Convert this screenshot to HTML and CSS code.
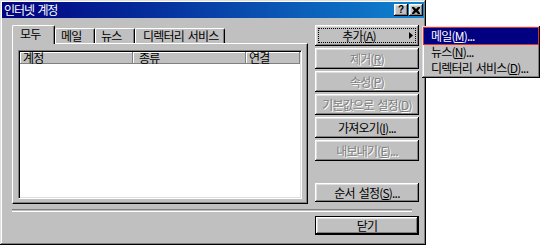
FILE: index.html
```html
<!DOCTYPE html>
<html>
<head>
<meta charset="utf-8">
<title>인터넷 계정</title>
<link rel="stylesheet" href="styles.css">
</head>
<body>
  <div class="window">
    <div class="titlebar">
      <span class="title">인터넷 계정</span>
      <div class="title-buttons">
        <span class="tbtn help">?</span>
        <span class="tbtn"><svg width="8" height="7" viewBox="0 0 8 7"><path d="M0 0h2l2 2 2-2h2v1l-2 2.5 2 2.5v1h-2l-2-2-2 2h-2v-1l2-2.5-2-2.5z" fill="#000"/></svg></span>
      </div>
    </div>

    <div class="dialog">
      <div class="main">
        <div class="tabs-area">
          <div class="tab-strip">
            <div class="tab active">모두</div>
            <div class="tab tab-mail">메일</div>
            <div class="tab tab-news">뉴스</div>
            <div class="tab tab-dir">디렉터리 서비스</div>
          </div>
          <div class="panel">
            <div class="listview">
              <div class="lv-header">
                <div class="col col-account">계정</div>
                <div class="col col-type">종류</div>
                <div class="col col-conn">연결</div>
              </div>
            </div>
          </div>
        </div>

        <div class="buttons">
          <button class="btn btn-add"><span class="label"><span class="focus">추가(<u>A</u>)</span></span><svg class="arrow" width="4" height="7" viewBox="0 0 4 7"><path d="M0 0L4 3.5L0 7z" fill="#000"/></svg></button>
          <button class="btn disabled">제거(<u>R</u>)</button>
          <button class="btn disabled">속성(<u>P</u>)</button>
          <button class="btn disabled">기본값으로 설정(<u>D</u>)</button>
          <button class="btn">가져오기(<u>I</u>)...</button>
          <button class="btn disabled">내보내기(<u>E</u>)...</button>
          <button class="btn btn-order">순서 설정(<u>S</u>)...</button>
        </div>
      </div>

      <div class="separator"></div>

      <div class="footer">
        <button class="btn btn-close">닫기</button>
      </div>
    </div>
  </div>

  <div class="menu">
    <div class="menu-item selected">메일(<u>M</u>)...</div>
    <div class="menu-item">뉴스(<u>N</u>)...</div>
    <div class="menu-item">디렉터리 서비스(<u>D</u>)...</div>
  </div>
</body>
</html>
```

FILE: styles.css
```css
html, body { margin: 0; padding: 0; }

body
{
    background: #fff;
    font: 12px "Noto Sans CJK KR", "Liberation Sans", sans-serif;
    letter-spacing: -0.8px;
    word-spacing: 2px;
    color: #000;
    position: relative;
    width: 540px;
    height: 245px;
    overflow: hidden;
}

/* window frame */

.window
{
    box-sizing: border-box;
    width: 426px;
    height: 245px;
    padding: 2px;
    background: #c0c0c0;
    box-shadow: inset -1px -1px #000, inset 1px 1px #dfdfdf, inset -2px -2px #808080, inset 2px 2px #fff;
}

.titlebar
{
    height: 16px;
    display: flex;
    align-items: center;
    justify-content: space-between;
    padding: 0 1px 0 2px;
    background: linear-gradient(90deg, #000080, #1084d0);
    color: #fff;
}

.title
{
    letter-spacing: -1.1px;
    line-height: 16px;
}

.title-buttons
{
    display: flex;
    gap: 1px;
}

.tbtn
{
    box-sizing: border-box;
    width: 14px;
    height: 12px;
    display: flex;
    align-items: center;
    justify-content: center;
    background: #c0c0c0;
    box-shadow: inset -1px -1px #000, inset 1px 1px #fff, inset -2px -2px #808080, inset 2px 2px #dfdfdf;
}

.tbtn.help
{
    color: #000;
    font: bold 10px "Liberation Sans", sans-serif;
    letter-spacing: 0;
    line-height: 12px;
}

/* dialog body */

.dialog
{
    padding: 7px 5px 0 10px;
}

.main
{
    display: flex;
    gap: 7px;
}

.tabs-area
{
    width: 296px;
}

.tab-strip
{
    height: 18px;
    display: flex;
    align-items: flex-end;
}

.tab
{
    box-sizing: border-box;
    height: 15px;
    padding-left: 5px;
    line-height: 14px;
    background: #c0c0c0;
    border-top: 1px solid #fff;
    border-left: 1px solid #fff;
    border-right: 1px solid #000;
    border-radius: 2px 2px 0 0;
    box-shadow: inset -1px 0 #808080;
    white-space: nowrap;
}

.tab.active
{
    width: 43px;
    height: 19px;
    padding-left: 7px;
    line-height: 16px;
    margin-bottom: -1px;
    position: relative;
    z-index: 1;
}

.tab-mail { width: 40px; }
.tab-news { width: 40px; }
.tab-dir { width: 90px; padding-left: 7px; }

.panel
{
    box-sizing: border-box;
    height: 161px;
    padding: 6px 5px 4px 5px;
    display: flex;
    border: 1px solid;
    border-color: #fff #000 #000 #fff;
    box-shadow: inset -1px -1px #808080;
}

.listview
{
    flex: 1;
    background: #fff;
    border: 1px solid;
    border-color: #808080 #fff #fff #808080;
    box-shadow: inset 1px 1px #000, inset -1px -1px #dfdfdf;
    padding: 1px;
}

.lv-header
{
    display: flex;
    height: 12px;
}

.col
{
    box-sizing: border-box;
    padding-left: 3px;
    line-height: 12px;
    background: #c0c0c0;
    box-shadow: inset -1px -1px #808080, inset 1px 1px #fff;
}

.col-account { width: 113px; }
.col-type { width: 113px; padding-left: 6px; }
.col-conn { flex: 1; }

/* buttons */

.buttons
{
    width: 104px;
    display: flex;
    flex-direction: column;
    gap: 2px;
}

.btn
{
    box-sizing: border-box;
    width: 104px;
    height: 21px;
    padding: 0;
    border: none;
    font: inherit;
    letter-spacing: inherit;
    word-spacing: inherit;
    color: #000;
    background: #c0c0c0;
    box-shadow: inset -1px -1px #000, inset 1px 1px #fff, inset -2px -2px #808080, inset 2px 2px #dfdfdf;
    display: flex;
    align-items: center;
    justify-content: center;
    white-space: nowrap;
}

.btn u { text-underline-offset: 1px; }

.btn.disabled
{
    color: #808080;
    text-shadow: 1px 1px #fff;
}

.btn-add
{
    justify-content: flex-start;
    outline: 1px dotted #000;
    outline-offset: -4px;
}

.btn-add .label
{
    flex: 1;
    display: flex;
    justify-content: center;
    padding-left: 3px;
}

.btn-add .arrow
{
    margin: 0 6px 0 9px;
}

.btn-order
{
    height: 19px;
    margin-top: 20px;
}

.separator
{
    width: 400px;
    height: 1px;
    margin-top: 5px;
    border-top: 1px solid #808080;
    border-bottom: 1px solid #fff;
}

.footer
{
    display: flex;
    justify-content: flex-end;
    margin-top: 4px;
}

.btn-close
{
    height: 19px;
    border: 1px solid #000;
}

/* popup menu */

.menu
{
    position: absolute;
    left: 422px;
    top: 26px;
    box-sizing: border-box;
    width: 118px;
    height: 52px;
    padding: 2px;
    background: #c0c0c0;
    box-shadow: inset -1px -1px #000, inset 1px 1px #dfdfdf, inset -2px -2px #808080, inset 2px 2px #fff;
}

.menu-item
{
    height: 16px;
    line-height: 16px;
    padding-left: 7px;
    white-space: nowrap;
}

.menu-item.selected
{
    background: #000080;
    color: #fff;
    outline: 1px solid #e03030;
}
```
